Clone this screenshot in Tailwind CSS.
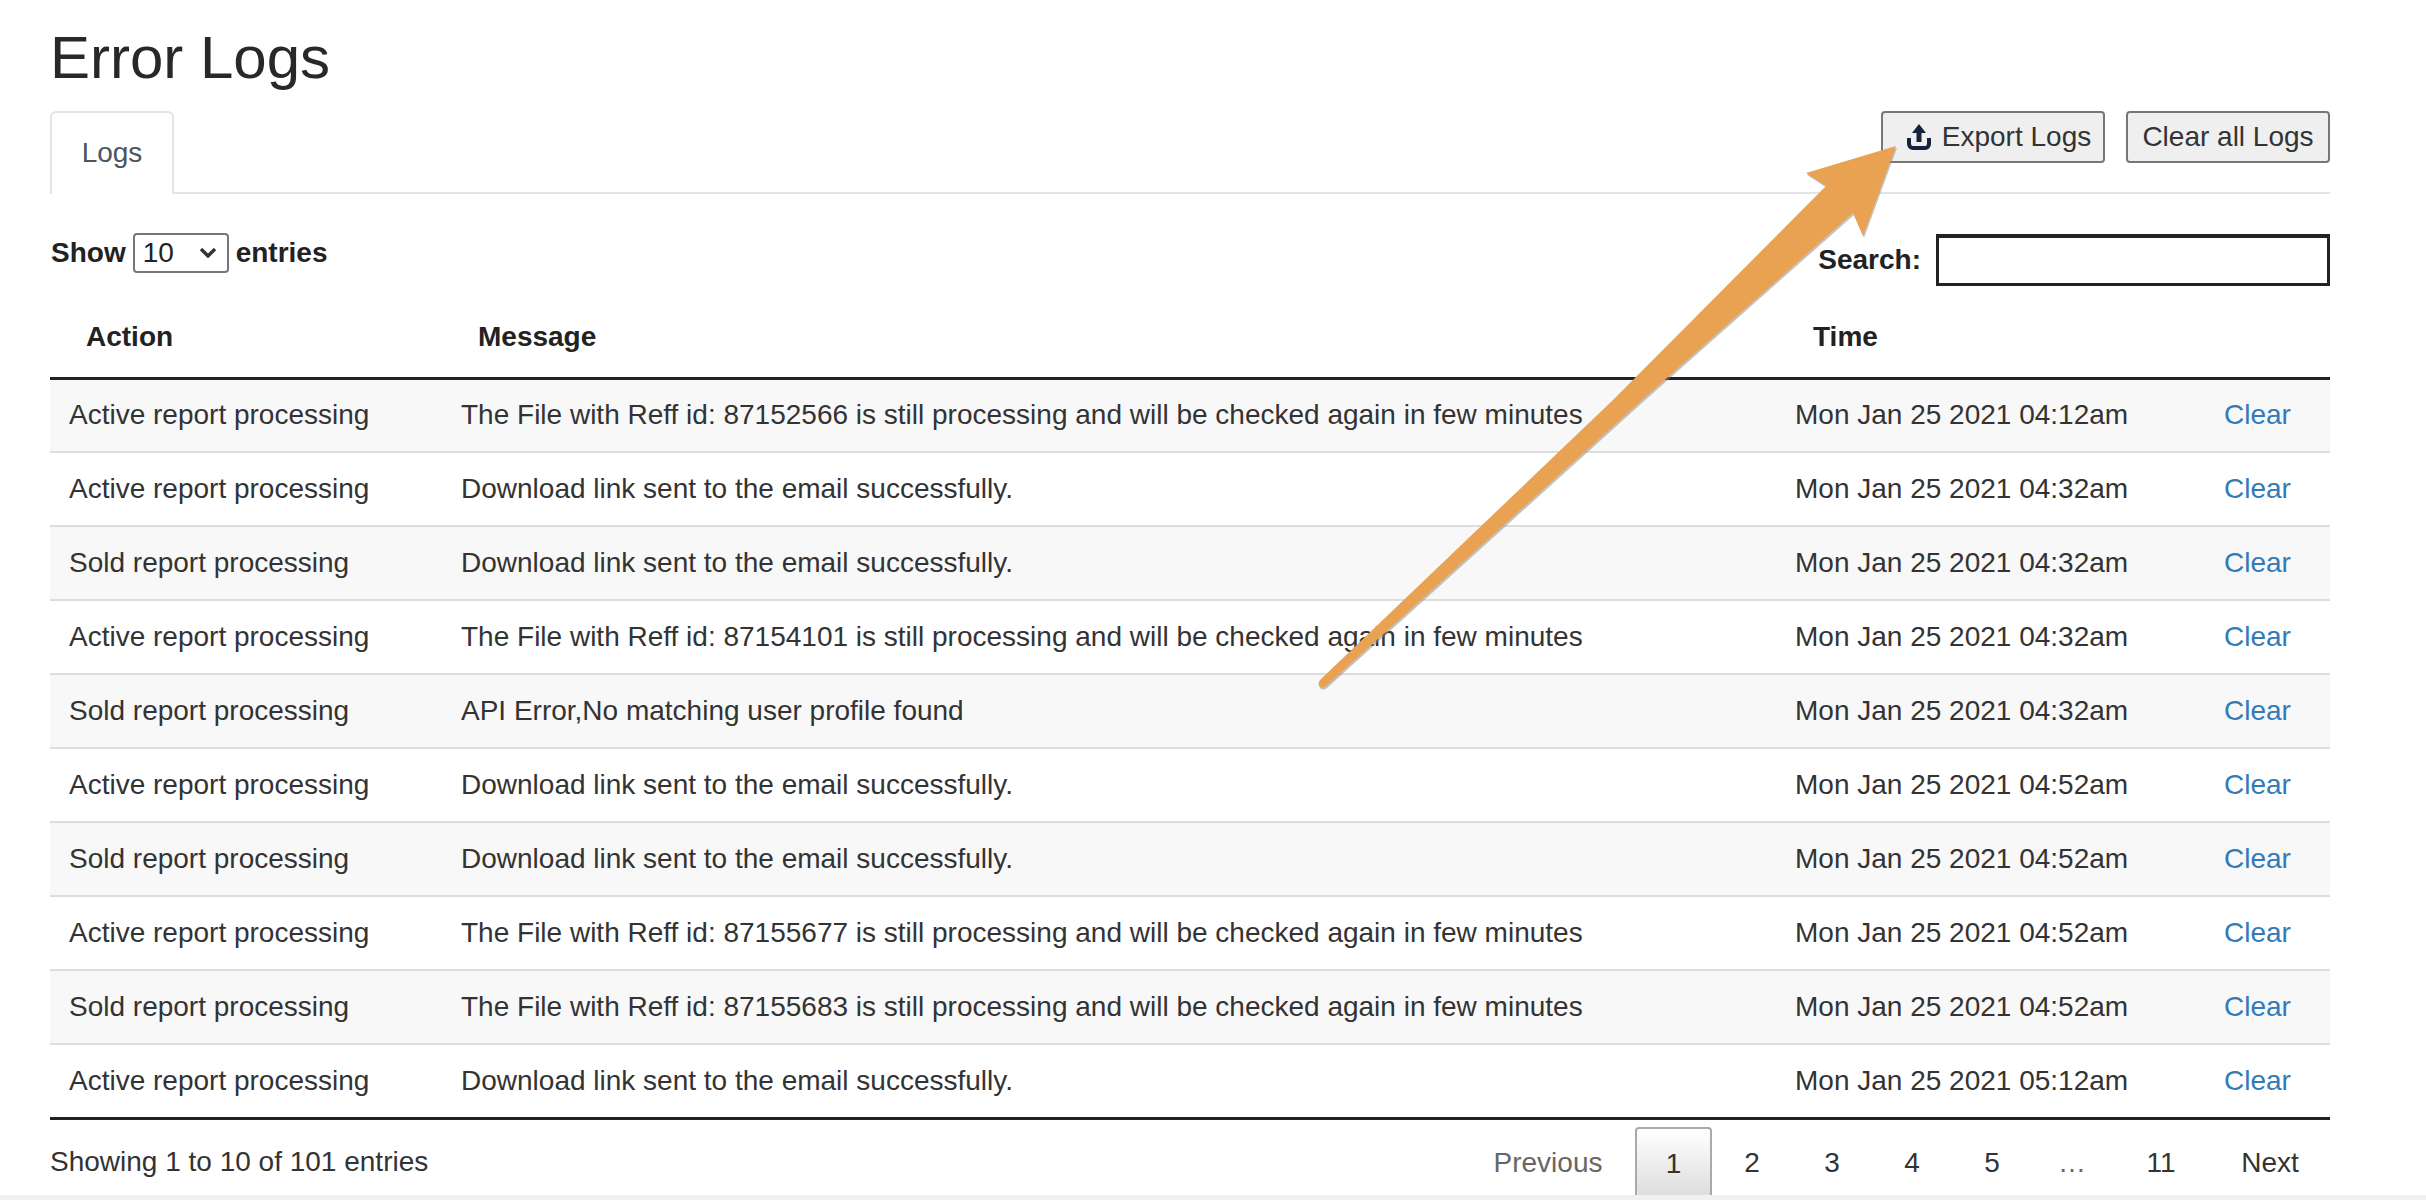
<!DOCTYPE html>
<html lang="en">
<head>
  <meta charset="UTF-8" />
  <title>Error Logs</title>
  <script src="https://cdn.jsdelivr.net/npm/@tailwindcss/browser@4"></script>
</head>
<body class="relative h-[1200px] overflow-hidden bg-white font-['Liberation_Sans',Arial,sans-serif] text-[28px] text-[#333]">
  <div class="flex h-[1195px] w-[2330px] flex-col overflow-hidden pl-[50px]">
    <h1 class="h-[111px] shrink-0 pt-[20px] text-[60px] leading-[76px] text-[#282828]">Error Logs</h1>

    <!-- tabs and actions -->
    <div class="flex h-[83px] shrink-0 items-start justify-between border-b-[2px] border-[#e4e4e4]">
      <div class="flex h-[83px] w-[124px] items-center justify-center rounded-t-[6px] border-[2px] border-b-0 border-[#e4e4e4] bg-white pb-[2px] text-[#4a5560]">Logs</div>
      <div class="flex gap-[21px]">
        <button class="flex h-[52px] w-[224px] items-center justify-center gap-[11px] rounded-[4px] border-[2px] border-[#777] bg-[#efefef] pl-[12px]">
          <svg class="h-[26px] w-[24px]" viewBox="0 0 24 26" fill="none" stroke="#15233d" stroke-width="4">
            <path d="M12 0 5 9h4.500v9h5v-9H19z" fill="#15233d" stroke="none" />
            <path d="M2 14v6a4 4 0 0 0 4 4h12a4 4 0 0 0 4-4v-6" />
          </svg>
          Export Logs
        </button>
        <button class="h-[52px] w-[204px] rounded-[4px] border-[2px] border-[#777] bg-[#efefef]">Clear all Logs</button>
      </div>
    </div>

    <!-- length and search -->
    <div class="flex h-[109px] shrink-0 justify-between font-bold text-[#222]">
      <label class="ml-[1px] flex h-[80px] items-center gap-[7px] pt-[38px]">
        Show
        <span class="flex h-[40px] w-[96px] items-center justify-between rounded-[4px] border-[2px] border-[#777] pr-[10px] pl-[8px] font-normal">
          10
          <svg class="h-[10px] w-[18px]" viewBox="0 0 18 10" fill="none" stroke="#333" stroke-width="3.4"><path d="m2 1 7 7 7-7" /></svg>
        </span>
        entries
      </label>
      <label class="flex items-start gap-[15px] pt-[40px]">
        <span class="pt-[5px]">Search:</span>
        <span class="block h-[52px] w-[394px] border-[3px] border-t-[4px] border-[#222] bg-white"></span>
      </label>
    </div>

    <table class="w-[2280px] shrink-0 table-fixed border-collapse">
      <colgroup>
        <col class="w-[392px]" /><col class="w-[1334px]" /><col class="w-[429px]" /><col class="w-[125px]" />
      </colgroup>
      <thead>
        <tr class="h-[75px] border-b-[3px] border-[#222] text-left text-[#222]">
          <th class="pb-[6px] pl-[36px] font-bold">Action</th>
          <th class="pb-[6px] pl-[36px] font-bold">Message</th>
          <th class="pb-[6px] pl-[37px] font-bold">Time</th>
          <th></th>
        </tr>
      </thead>
      <tbody class="border-b-[3px] border-[#222]">
        <tr class="h-[74px] border-b-[2px] border-[#ddd] bg-[#f8f8f8]"><td class="pl-[19px]">Active report processing</td><td class="pl-[19px]">The File with Reff id: 87152566 is still processing and will be checked again in few minutes</td><td class="pl-[19px]">Mon Jan 25 2021 04:12am</td><td class="pl-[19px] text-[#337ab7]">Clear</td></tr>
        <tr class="h-[74px] border-b-[2px] border-[#ddd]"><td class="pl-[19px]">Active report processing</td><td class="pl-[19px]">Download link sent to the email successfully.</td><td class="pl-[19px]">Mon Jan 25 2021 04:32am</td><td class="pl-[19px] text-[#337ab7]">Clear</td></tr>
        <tr class="h-[74px] border-b-[2px] border-[#ddd] bg-[#f8f8f8]"><td class="pl-[19px]">Sold report processing</td><td class="pl-[19px]">Download link sent to the email successfully.</td><td class="pl-[19px]">Mon Jan 25 2021 04:32am</td><td class="pl-[19px] text-[#337ab7]">Clear</td></tr>
        <tr class="h-[74px] border-b-[2px] border-[#ddd]"><td class="pl-[19px]">Active report processing</td><td class="pl-[19px]">The File with Reff id: 87154101 is still processing and will be checked again in few minutes</td><td class="pl-[19px]">Mon Jan 25 2021 04:32am</td><td class="pl-[19px] text-[#337ab7]">Clear</td></tr>
        <tr class="h-[74px] border-b-[2px] border-[#ddd] bg-[#f8f8f8]"><td class="pl-[19px]">Sold report processing</td><td class="pl-[19px]">API Error,No matching user profile found</td><td class="pl-[19px]">Mon Jan 25 2021 04:32am</td><td class="pl-[19px] text-[#337ab7]">Clear</td></tr>
        <tr class="h-[74px] border-b-[2px] border-[#ddd]"><td class="pl-[19px]">Active report processing</td><td class="pl-[19px]">Download link sent to the email successfully.</td><td class="pl-[19px]">Mon Jan 25 2021 04:52am</td><td class="pl-[19px] text-[#337ab7]">Clear</td></tr>
        <tr class="h-[74px] border-b-[2px] border-[#ddd] bg-[#f8f8f8]"><td class="pl-[19px]">Sold report processing</td><td class="pl-[19px]">Download link sent to the email successfully.</td><td class="pl-[19px]">Mon Jan 25 2021 04:52am</td><td class="pl-[19px] text-[#337ab7]">Clear</td></tr>
        <tr class="h-[74px] border-b-[2px] border-[#ddd]"><td class="pl-[19px]">Active report processing</td><td class="pl-[19px]">The File with Reff id: 87155677 is still processing and will be checked again in few minutes</td><td class="pl-[19px]">Mon Jan 25 2021 04:52am</td><td class="pl-[19px] text-[#337ab7]">Clear</td></tr>
        <tr class="h-[74px] border-b-[2px] border-[#ddd] bg-[#f8f8f8]"><td class="pl-[19px]">Sold report processing</td><td class="pl-[19px]">The File with Reff id: 87155683 is still processing and will be checked again in few minutes</td><td class="pl-[19px]">Mon Jan 25 2021 04:52am</td><td class="pl-[19px] text-[#337ab7]">Clear</td></tr>
        <tr class="h-[74px]"><td class="pl-[19px]">Active report processing</td><td class="pl-[19px]">Download link sent to the email successfully.</td><td class="pl-[19px]">Mon Jan 25 2021 05:12am</td><td class="pl-[19px] text-[#337ab7]">Clear</td></tr>
      </tbody>
    </table>

    <!-- footer -->
    <div class="flex shrink-0 items-start justify-between pt-[7px]">
      <div class="pt-[14px]">Showing 1 to 10 of 101 entries</div>
      <div class="flex h-[72px] items-center">
        <span class="w-[174px] text-center text-[#666]">Previous</span>
        <span class="flex h-[72px] w-[77px] items-center justify-center rounded-t-[4px] border-[2px] border-b-0 border-[#aaa] bg-linear-to-b from-white to-[#dcdcdc]">1</span>
        <span class="w-[80px] text-center">2</span>
        <span class="w-[80px] text-center">3</span>
        <span class="w-[80px] text-center">4</span>
        <span class="w-[80px] text-center">5</span>
        <span class="w-[80px] text-center text-[#666]">…</span>
        <span class="w-[98px] text-center">11</span>
        <span class="w-[120px] text-center">Next</span>
      </div>
    </div>
  </div>
  <div class="h-[5px] bg-[#f1f1f1]"></div>

  <!-- annotation arrow drawn over the page -->
  <svg class="pointer-events-none absolute top-0 left-0 h-[1200px] w-[2426px]" viewBox="0 0 2426 1200">
    <path d="M1320 680 1613 400 1826 186 1806 173 1896 146 1863 236 1853 213 1642 400 1326 686Q1322 689 1319 686 1318 683 1320 680Z" fill="#888" fill-opacity=".5" transform="translate(1 2)" />
    <path d="M1320 680 1613 400 1826 186 1806 173 1896 146 1863 236 1853 213 1642 400 1326 686Q1322 689 1319 686 1318 683 1320 680Z" fill="#e9a251" />
  </svg>
</body>
</html>
